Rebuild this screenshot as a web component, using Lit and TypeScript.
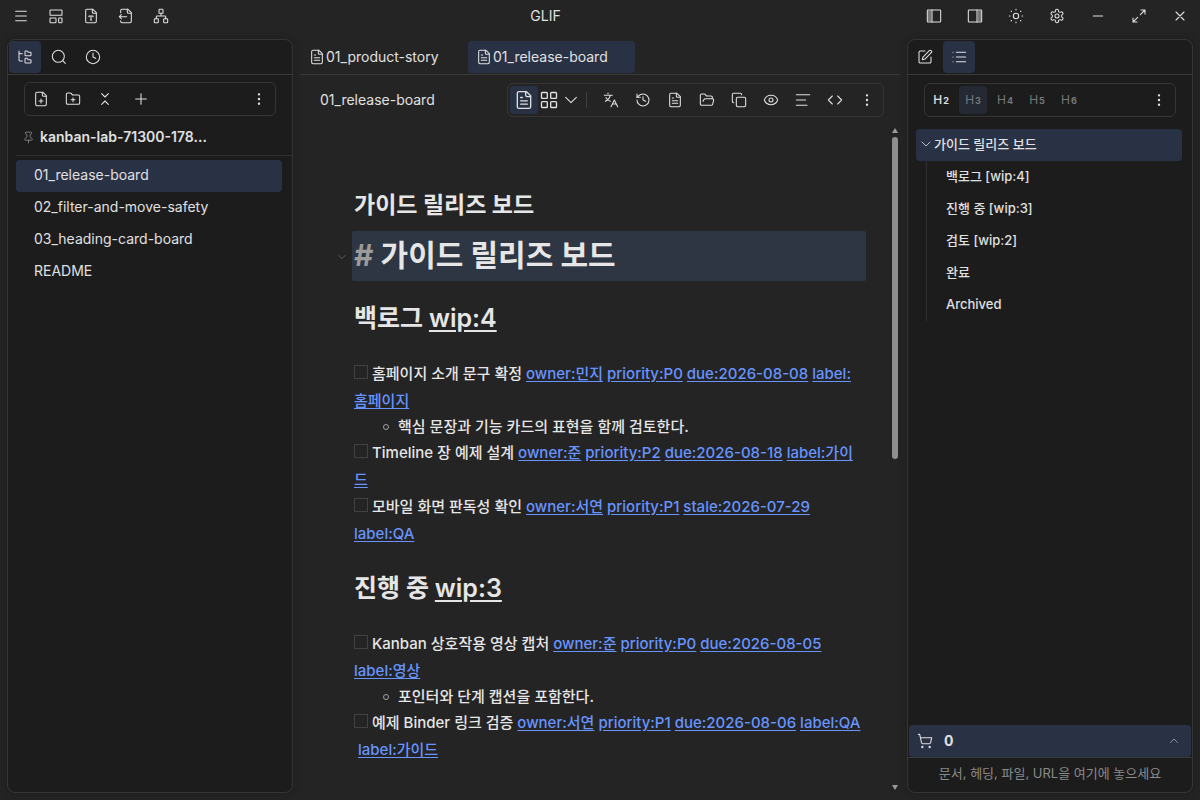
import { LitElement, html, css, svg, nothing } from "lit";
import { customElement, property, state } from "lit/decorators.js";
import { classMap } from "lit/directives/class-map.js";

const ICONS: Record<string, unknown> = {
  menu: svg`<path d="M4 5h16M4 12h16M4 19h16"/>`,
  layout: svg`<rect x="3" y="3" width="18" height="8" rx="1"/><rect x="3" y="15" width="9" height="7" rx="1"/><rect x="16" y="15" width="5" height="7" rx="1"/>`,
  fileType: svg`<path d="M15 2H6a2 2 0 0 0-2 2v16a2 2 0 0 0 2 2h12a2 2 0 0 0 2-2V7Z"/><path d="M14 2v4a2 2 0 0 0 2 2h4M9 13v-1h6v1M12 12v6M11 18h2"/>`,
  fileInput: svg`<path d="M4 7V4a2 2 0 0 1 2-2h9l5 5v13a2 2 0 0 1-2 2H6a2 2 0 0 1-2-2v-1"/><path d="M14 2v4a2 2 0 0 0 2 2h4M13 13H2M5 10l-3 3 3 3"/>`,
  network: svg`<rect x="16" y="16" width="6" height="6" rx="1"/><rect x="2" y="16" width="6" height="6" rx="1"/><rect x="9" y="2" width="6" height="6" rx="1"/><path d="M5 16v-3a1 1 0 0 1 1-1h12a1 1 0 0 1 1 1v3M12 12V8"/>`,
  panelLeft: svg`<path d="M3 4h5v16H3z" fill="currentColor" fill-opacity=".45" stroke="none"/><rect x="2" y="3" width="20" height="18" rx="1"/><path d="M9 3v18"/>`,
  panelRight: svg`<path d="M16 4h5v16h-5z" fill="currentColor" fill-opacity=".45" stroke="none"/><rect x="2" y="3" width="20" height="18" rx="1"/><path d="M15 3v18"/>`,
  sun: svg`<circle cx="12" cy="12" r="4"/><path d="M12 2v1M12 21v1M4.600 4.600l.700.700M18.700 18.700l.700.700M2 12h1M21 12h1M5.300 18.700l-.700.700M19.400 4.600l-.700.700"/>`,
  settings: svg`<path d="M12.220 2h-.440a2 2 0 0 0-2 2v.180a2 2 0 0 1-1 1.730l-.430.250a2 2 0 0 1-2 0l-.150-.080a2 2 0 0 0-2.730.730l-.220.380a2 2 0 0 0 .730 2.730l.150.100a2 2 0 0 1 1 1.720v.510a2 2 0 0 1-1 1.740l-.150.090a2 2 0 0 0-.730 2.730l.220.380a2 2 0 0 0 2.730.730l.150-.080a2 2 0 0 1 2 0l.430.250a2 2 0 0 1 1 1.730V20a2 2 0 0 0 2 2h.440a2 2 0 0 0 2-2v-.180a2 2 0 0 1 1-1.730l.430-.250a2 2 0 0 1 2 0l.150.080a2 2 0 0 0 2.730-.730l.220-.390a2 2 0 0 0-.730-2.730l-.150-.080a2 2 0 0 1-1-1.740v-.500a2 2 0 0 1 1-1.740l.150-.090a2 2 0 0 0 .730-2.730l-.220-.380a2 2 0 0 0-2.730-.730l-.150.080a2 2 0 0 1-2 0l-.430-.250a2 2 0 0 1-1-1.730V4a2 2 0 0 0-2-2z"/><circle cx="12" cy="12" r="3"/>`,
  minus: svg`<path d="M5 12h14"/>`,
  expand: svg`<path d="M15 3h6v6M21 3l-7 7M3 21l7-7M9 21H3v-6"/>`,
  close: svg`<path d="M18 6 6 18M6 6l12 12"/>`,
  folderTree: svg`<path d="M20 10a1 1 0 0 0 1-1V6a1 1 0 0 0-1-1h-2.500a1 1 0 0 1-.800-.400l-.900-1.200A1 1 0 0 0 15 3h-2a1 1 0 0 0-1 1v5a1 1 0 0 0 1 1ZM20 21a1 1 0 0 0 1-1v-3a1 1 0 0 0-1-1h-2.900a1 1 0 0 1-.880-.550l-.420-.850a1 1 0 0 0-.920-.600H13a1 1 0 0 0-1 1v5a1 1 0 0 0 1 1ZM3 5a2 2 0 0 0 2 2h3M3 3v13a2 2 0 0 0 2 2h3"/>`,
  search: svg`<circle cx="11" cy="11" r="9"/><path d="m21.500 21.500-4-4"/>`,
  clock: svg`<circle cx="12" cy="12" r="10"/><path d="M12 6v6l4 2"/>`,
  filePlus: svg`<path d="M15 2H6a2 2 0 0 0-2 2v16a2 2 0 0 0 2 2h12a2 2 0 0 0 2-2V7Z"/><path d="M14 2v4a2 2 0 0 0 2 2h4M9 15h6M12 12v6"/>`,
  folderPlus: svg`<path d="M12 10v6M9 13h6M20 20a2 2 0 0 0 2-2V8a2 2 0 0 0-2-2h-7.900a2 2 0 0 1-1.690-.900L9.600 3.900A2 2 0 0 0 7.930 3H4a2 2 0 0 0-2 2v13a2 2 0 0 0 2 2Z"/>`,
  fold: svg`<path d="m7 20 5-5 5 5M7 4l5 5 5-5"/>`,
  plus: svg`<path d="M4 12h16M12 4v16"/>`,
  more: svg`<g fill="currentColor"><circle cx="12" cy="5" r="1"/><circle cx="12" cy="12" r="1"/><circle cx="12" cy="19" r="1"/></g>`,
  pin: svg`<path d="M12 17v5M9 10.760a2 2 0 0 1-1.110 1.790l-1.780.900A2 2 0 0 0 5 15.240V16a1 1 0 0 0 1 1h12a1 1 0 0 0 1-1v-.760a2 2 0 0 0-1.110-1.790l-1.780-.900A2 2 0 0 1 15 10.760V7a1 1 0 0 1 1-1 2 2 0 0 0 0-4H8a2 2 0 0 0 0 4 1 1 0 0 1 1 1z"/>`,
  file: svg`<path d="M15 2H6a2 2 0 0 0-2 2v16a2 2 0 0 0 2 2h12a2 2 0 0 0 2-2V7Z"/><path d="M14 2v4a2 2 0 0 0 2 2h4M10 9H8M16 13H8M16 17H8"/>`,
  grid: svg`<rect x="3" y="3" width="7" height="7" rx="1"/><rect x="14" y="3" width="7" height="7" rx="1"/><rect x="14" y="14" width="7" height="7" rx="1"/><rect x="3" y="14" width="7" height="7" rx="1"/>`,
  down: svg`<path d="m4 8 8 8 8-8"/>`,
  chevron: svg`<path d="m4 8 8 8 8-8"/>`,
  up: svg`<path d="m5 15 7-7 7 7"/>`,
  translate: svg`<path d="M2 5h12M7 2h1M3.500 14c4-2 6.500-5 7.500-9M4.500 8.500c1.500 2.500 4 4.500 6.500 5.500M22 22l-5-10-5 10M14 18h6"/>`,
  history: svg`<path d="M3 12a9 9 0 1 0 9-9 9.750 9.750 0 0 0-6.740 2.740L3 8"/><path d="M3 3v5h5M12 7v5l4 2"/>`,
  folderOpen: svg`<path d="m6 14 1.500-2.900A2 2 0 0 1 9.240 10H20a2 2 0 0 1 1.940 2.500l-1.540 6a2 2 0 0 1-1.950 1.500H4a2 2 0 0 1-2-2V5a2 2 0 0 1 2-2h3.900a2 2 0 0 1 1.690.900l.810 1.200a2 2 0 0 0 1.670.900H18a2 2 0 0 1 2 2v2"/>`,
  copy: svg`<rect x="8" y="8" width="14" height="14" rx="2"/><path d="M4 16c-1.100 0-2-.900-2-2V4c0-1.100.900-2 2-2h10c1.100 0 2 .900 2 2"/>`,
  eye: svg`<path d="M2.060 12.350a1 1 0 0 1 0-.700 10.750 10.750 0 0 1 19.880 0 1 1 0 0 1 0 .700 10.750 10.750 0 0 1-19.880 0"/><circle cx="12" cy="12" r="3"/>`,
  align: svg`<path d="M2 4h20M2 12h14M2 20h16"/>`,
  code: svg`<path d="m16 18 6-6-6-6M8 6l-6 6 6 6"/>`,
  edit: svg`<path d="M12 3H5a2 2 0 0 0-2 2v14a2 2 0 0 0 2 2h14a2 2 0 0 0 2-2v-7"/><path d="M18.380 2.620a1 1 0 0 1 3 3l-9.010 9.010a2 2 0 0 1-.850.510l-2.870.840a.500.500 0 0 1-.620-.620l.840-2.870a2 2 0 0 1 .510-.850z"/>`,
  list: svg`<path d="M3 5h.010M3 12h.010M3 19h.010M8 5h14M8 12h14M8 19h14"/>`,
  cart: svg`<circle cx="8" cy="21" r="1"/><circle cx="19" cy="21" r="1"/><path d="M2.050 2.050h2l2.660 12.420a2 2 0 0 0 2 1.580h9.780a2 2 0 0 0 1.950-1.570l1.650-7.430H5.120"/>`,
};

@customElement("glif-icon")
class GlifIcon extends LitElement {
  @property() name = "";
  @property({ type: Number }) size = 16;
  static styles = css`
    :host { display: inline-flex; flex: none; }
    svg { display: block; fill: none; stroke: currentColor; stroke-width: 1.6; stroke-linecap: round; stroke-linejoin: round; }
  `;
  render() {
    return html`<svg viewBox="0 0 24 24" width=${this.size} height=${this.size} aria-hidden="true">${ICONS[this.name]}</svg>`;
  }
}

interface Task {
  text: string;
  tags: string[];
  note?: string;
}
interface Section {
  title: string;
  wip: string;
  tasks: Task[];
}

const SECTIONS: Section[] = [
  {
    title: "백로그",
    wip: "wip:4",
    tasks: [
      { text: "홈페이지 소개 문구 확정", tags: ["owner:민지", "priority:P0", "due:2026-08-08", "label:홈페이지"], note: "핵심 문장과 기능 카드의 표현을 함께 검토한다." },
      { text: "Timeline 장 예제 설계", tags: ["owner:준", "priority:P2", "due:2026-08-18", "label:가이드"] },
      { text: "모바일 화면 판독성 확인", tags: ["owner:서연", "priority:P1", "stale:2026-07-29", "label:QA"] },
    ],
  },
  {
    title: "진행 중",
    wip: "wip:3",
    tasks: [
      { text: "Kanban 상호작용 영상 캡처", tags: ["owner:준", "priority:P0", "due:2026-08-05", "label:영상"], note: "포인터와 단계 캡션을 포함한다." },
      { text: "예제 Binder 링크 검증", tags: ["owner:서연", "priority:P1", "due:2026-08-06", "label:QA", "label:가이드"] },
    ],
  },
];

const FILES = ["01_release-board", "02_filter-and-move-safety", "03_heading-card-board", "README"];
const OUTLINE = ["백로그 [wip:4]", "진행 중 [wip:3]", "검토 [wip:2]", "완료", "Archived"];

@customElement("app-root")
class AppRoot extends LitElement {
  @state() private file = FILES[0];

  static styles = css`
    :host {
      display: flex; flex-direction: column; height: 100vh; overflow: hidden;
      background: #242424; color: #e0e0e0;
      font: 400 14px/20px Inter, "Noto Sans CJK KR", sans-serif;
    }
    * { box-sizing: border-box; }
    button { font: inherit; color: inherit; background: none; border: 0; padding: 0; margin: 0; display: inline-flex; align-items: center; justify-content: center; flex: none; }
    h1, h2, p, ul { margin: 0; padding: 0; }
    ul { list-style: none; }
    .titlebar { display: flex; align-items: center; height: 32px; padding-left: 3px; margin-bottom: 7px; flex: none; }
    .titlebar .left button { width: 35px; height: 32px; }
    .titlebar .right button { width: 41px; height: 32px; }
    .left, .right { display: flex; }
    .app-name { flex: 1; text-align: center; font-size: 14px; line-height: 30px; }
    .workspace { flex: 1; min-height: 0; display: grid; grid-template-columns: 286px minmax(0, 1fr) 286px; gap: 7px; padding: 0 7px 7px; }
    .panel { display: flex; flex-direction: column; min-height: 0; background: #1c1c1c; border: 1px solid #353535; border-radius: 8px; overflow: hidden; box-shadow: 0 0 8px #0003; }
    .tabs { display: flex; gap: 2px; padding: 1px; border-bottom: 1px solid #3a3a3a; flex: none; }
    .tabs button { width: 32px; height: 32px; border-radius: 4px; }
    .tabs .active, .row.active, .toolbar .active { background: #293145; }
    .toolbar { display: flex; align-items: center; gap: 4px; height: 34px; padding: 2px; border: 1px solid #353535; border-radius: 6px; flex: none; }
    .toolbar button { width: 28px; height: 28px; border-radius: 4px; }
    .toolbar .last { margin-left: auto; }
    .files-tools { margin: 7px 16px 0; }
    .files-tools .spaced { margin-left: 4px; }
    .outline-tools { margin: 8px 16px 0; }
    .project { display: flex; align-items: center; gap: 5px; height: 40px; margin-left: 8px; padding: 3px 0 0 6px; border-bottom: 1px solid #303030; font-weight: 600; font-size: 14px; }
    .project glif-icon { color: #8c8c8c; }
    .tree { margin: 4px 10px 0 8px; }
    .row { display: flex; width: 100%; height: 32px; border-radius: 4px; justify-content: flex-start; padding: 0 18px 2px; font-size: 14px; text-align: left; }
    .outline { margin: 12px 10px 0 8px; font-weight: 500; }
    .outline .row { padding: 0 4px 2px; gap: 2px; font-size: 13px; }
    .outline ul { margin-left: 10px; border-left: 1px solid #303030; }
    .outline ul .row { padding-left: 19px; }
    .level { color: #777; font-size: 12px; }
    .level small { font-size: 9px; font-weight: 700; margin-left: 1px; }
    .level.on { color: #e0e0e0; font-weight: 500; }
    .toolbar .level.hover { background: #242934; }
    .grow { flex: 1; }
    .cart { display: flex; align-items: center; justify-content: flex-start; height: 32px; margin: 0 1px; padding: 0 11px 0 8px; gap: 11px; background: #293145; border-radius: 4px; font-weight: 700; font-size: 14px; }
    .cart glif-icon:last-child { margin-left: auto; color: #a5a9b3; }
    .drop { border-top: 1px solid #3a3a3a; height: 35px; line-height: 30px; text-align: center; color: #8a8a8a; font-size: 13px; }
    .center { display: flex; flex-direction: column; min-width: 0; min-height: 0; padding-top: 1px; }
    .center .tabs { gap: 0; }
    .center .tabs button { width: 167px; padding: 0 8px; gap: 1px; justify-content: flex-start; font-size: 14px; }
    .doc-head { display: flex; align-items: center; justify-content: space-between; padding: 8px 16px 0 20px; }
    .toolbar.view { gap: 0; }
    .view .narrow { width: 22px; }
    .view .sep { width: 1px; height: 16px; background: #404040; margin: 0 10px 0 4px; }
    .view .actions { display: flex; gap: 4px; }
    .stage { flex: 1; display: flex; min-height: 0; margin-top: 7px; }
    .doc { flex: 1; min-width: 0; overflow: hidden; padding: 61px 24px 0 52px; color: #e6e6e6; font-size: 15px; line-height: 27px; font-weight: 500; }
    .doc-title { font-size: 23px; line-height: 40px; font-weight: 700; padding-left: 2px; }
    .h1 { position: relative; margin-top: 6px; padding-left: 2px; height: 50px; background: #2e3543; border-radius: 2px; font-size: 30px; line-height: 48px; font-weight: 700; }
    .h1 .hash { color: #9b9b9b; }
    .h1 glif-icon { position: absolute; left: -15px; top: 21px; color: #777; }
    .h2 { margin: 17px 0 0 2px; font-size: 25px; line-height: 40px; font-weight: 700; }
    .h2 a { color: inherit; text-underline-offset: 3px; font-weight: 600; }
    .tasks { margin: 22px 3px 0 2px; }
    .tasks + .h2 { margin-top: 21px; }
    .task { white-space: pre-wrap; word-break: normal; }
    .task a { color: #6794ff; text-underline-offset: 2px; }
    .task input { appearance: none; width: 14px; height: 14px; border: 1px solid #414141; margin: 0 4px 0 0; vertical-align: 0; }
    .note { display: flex; align-items: center; gap: 9px; padding-left: 29px; line-height: 25px; }
    .note::before { content: ""; width: 4px; height: 4px; border: 1px solid #a0a0a0; border-radius: 50%; }
    .scroll { width: 10px; display: flex; flex-direction: column; align-items: center; padding: 4px 0 3px; flex: none; }
    .scroll i { width: 0; height: 0; border: 3px solid transparent; border-top: 0; border-bottom: 5px solid #9a9a9a; }
    .scroll i.down { border-bottom: 0; border-top: 5px solid #9a9a9a; }
    .track { flex: 1; align-self: stretch; padding: 4px 2px; }
    .thumb { height: 50%; background: #8f8f8f; border-radius: 3px; }
  `;

  private btn(icon: string, label: string, cls = "", size = 16) {
    return html`<button class=${cls} aria-label=${label} title=${label}><glif-icon name=${icon} size=${size}></glif-icon></button>`;
  }

  // A second label stays attached to its own leading space when the line wraps.
  private tag(tag: string, index: number) {
    return index > 3 ? html`<wbr />&nbsp;<a href="#tag">${tag}</a>` : html` <a href="#tag">${tag}</a>`;
  }

  private section(s: Section) {
    return html`
      <h2 class="h2">${s.title} <a href="#wip">${s.wip}</a></h2>
      <ul class="tasks">
        ${s.tasks.map(
          (t) => html`<li>
            <div class="task"><input type="checkbox" aria-label=${t.text} />${t.text}${t.tags.map((tag, i) => this.tag(tag, i))}</div>
            ${t.note ? html`<p class="note">${t.note}</p>` : nothing}
          </li>`
        )}
      </ul>`;
  }

  render() {
    return html`
      <header class="titlebar">
        <div class="left">
          ${this.btn("menu", "Menu")}${this.btn("layout", "Layout")}${this.btn("fileType", "Text file")}${this.btn("fileInput", "Import")}${this.btn("network", "Graph")}
        </div>
        <div class="app-name">GLIF</div>
        <div class="right">
          ${this.btn("panelLeft", "Left panel")}${this.btn("panelRight", "Right panel")}${this.btn("sun", "Theme")}${this.btn("settings", "Settings")}${this.btn("minus", "Minimize")}${this.btn("expand", "Maximize")}${this.btn("close", "Close")}
        </div>
      </header>
      <main class="workspace">
        <aside class="panel">
          <nav class="tabs">${this.btn("folderTree", "Files", "active")}${this.btn("search", "Search")}${this.btn("clock", "Recent")}</nav>
          <div class="toolbar files-tools">
            ${this.btn("filePlus", "New file")}${this.btn("folderPlus", "New folder")}${this.btn("fold", "Collapse")}${this.btn("plus", "Add", "spaced")}${this.btn("more", "More", "last")}
          </div>
          <div class="project"><glif-icon name="pin" size="13"></glif-icon>kanban-lab-71300-178...</div>
          <ul class="tree">
            ${FILES.map((f) => html`<li><button class=${classMap({ row: true, active: f === this.file })} @click=${() => (this.file = f)}>${f}</button></li>`)}
          </ul>
        </aside>
        <section class="center">
          <nav class="tabs">
            <button><glif-icon name="file"></glif-icon>01_product-story</button>
            <button class="active"><glif-icon name="file"></glif-icon>01_release-board</button>
          </nav>
          <div class="doc-head">
            <span>01_release-board</span>
            <div class="toolbar view">
              ${this.btn("file", "Document", "active", 20)}${this.btn("grid", "Board", "narrow", 20)}${this.btn("down", "Views", "narrow")}
              <span class="sep"></span>
              <div class="actions">
                ${this.btn("translate", "Translate")}${this.btn("history", "History")}${this.btn("file", "Page")}${this.btn("folderOpen", "Open")}${this.btn("copy", "Copy")}${this.btn("eye", "Preview")}${this.btn("align", "Align")}${this.btn("code", "Source")}${this.btn("more", "More")}
              </div>
            </div>
          </div>
          <div class="stage">
            <article class="doc">
              <p class="doc-title">가이드 릴리즈 보드</p>
              <h1 class="h1"><glif-icon name="chevron" size="10"></glif-icon><span class="hash">#</span> 가이드 릴리즈 보드</h1>
              ${SECTIONS.map((s) => this.section(s))}
            </article>
            <div class="scroll"><i></i><div class="track"><div class="thumb"></div></div><i class="down"></i></div>
          </div>
        </section>
        <aside class="panel">
          <nav class="tabs">${this.btn("edit", "Edit")}${this.btn("list", "Outline", "active")}</nav>
          <div class="toolbar outline-tools">
            ${[2, 3, 4, 5, 6].map((n) => html`<button class=${classMap({ level: true, on: n === 2, hover: n === 3 })}><span>H<small>${n}</small></span></button>`)}
            ${this.btn("more", "More", "last")}
          </div>
          <div class="outline">
            <button class="row active"><glif-icon name="chevron" size="12"></glif-icon>가이드 릴리즈 보드</button>
            <ul>${OUTLINE.map((o) => html`<li><button class="row">${o}</button></li>`)}</ul>
          </div>
          <div class="grow"></div>
          <button class="cart"><glif-icon name="cart"></glif-icon>0<glif-icon name="up" size="12"></glif-icon></button>
          <p class="drop">문서, 헤딩, 파일, URL을 여기에 놓으세요</p>
        </aside>
      </main>
    `;
  }
}
